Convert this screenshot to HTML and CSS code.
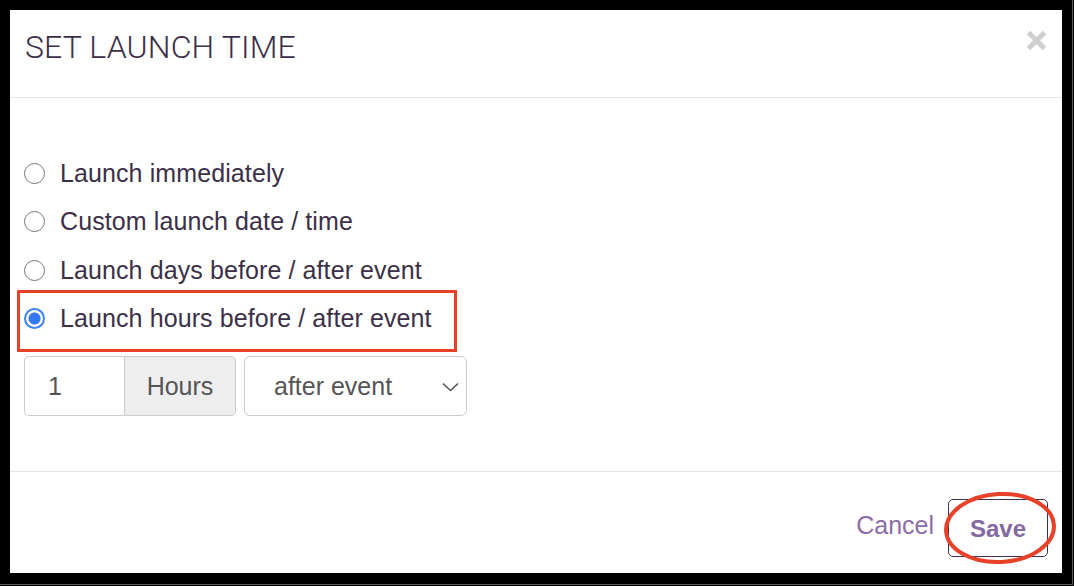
FILE: index.html
```html
<!DOCTYPE html>
<html>
<head>
<meta charset="utf-8">
<link rel="stylesheet" href="styles.css">
</head>
<body>
<div class="screen">
  <div class="modal">
    <div class="modal-header">
      <h1 class="modal-title">SET LAUNCH TIME</h1>
      <svg class="close" width="21" height="21" viewBox="0 0 21 21" aria-label="close">
        <path d="M2.5 2.5 L18.5 18.5 M18.5 2.5 L2.5 18.5" stroke="#cfcfcf" stroke-width="5" fill="none"/>
      </svg>
    </div>
    <div class="modal-body">
      <label class="option"><input type="radio" name="launch" class="radio"><span>Launch immediately</span></label>
      <label class="option"><input type="radio" name="launch" class="radio"><span>Custom launch date / time</span></label>
      <label class="option"><input type="radio" name="launch" class="radio"><span>Launch days before / after event</span></label>
      <div class="highlighted">
        <label class="option"><input type="radio" name="launch" class="radio" checked><span>Launch hours before / after event</span></label>
      </div>
      <div class="controls">
        <div class="input-group">
          <div class="num-input">1</div>
          <div class="addon">Hours</div>
        </div>
        <div class="select">
          <span>after event</span>
          <svg class="chevron" width="17" height="10" viewBox="0 0 17 10"><path d="M1 1.5 L8.5 8.5 L16 1.5" stroke="#555" stroke-width="1.6" fill="none"/></svg>
        </div>
      </div>
    </div>
    <div class="modal-footer">
      <button class="btn-cancel">Cancel</button>
      <div class="save-wrap">
        <button class="btn-save">Save</button>
        <svg class="ring" width="116" height="74" viewBox="0 0 116 74"><ellipse cx="58" cy="37" rx="54" ry="34" transform="rotate(-3 58 37)" stroke="#e8412a" stroke-width="4" fill="none"/></svg>
      </div>
    </div>
  </div>
</div>
</body>
</html>
```
FILE: styles.css
```css
html, body {
  margin: 0;
  padding: 0;
  background: #000;
}
.screen {
  box-sizing: border-box;
  width: 1073px;
  height: 585px;
  padding: 10px 10px 11px 10px;
  border-right: 1px solid #5a5a5a;
  border-bottom: 1px solid #5a5a5a;
}
.modal {
  width: 1052px;
  height: 563px;
  background: #fff;
  display: flex;
  flex-direction: column;
  font-family: "Liberation Sans", Arial, sans-serif;
}
.modal-header {
  height: 87px;
  box-sizing: content-box;
  border-bottom: 1px solid #e5e5e5;
  display: flex;
  justify-content: space-between;
  align-items: flex-start;
  padding: 0 15px 0 15px;
}
.modal-title {
  margin: 19px 0 0 0;
  font-family: Roboto, "Liberation Sans", sans-serif;
  font-weight: 300;
  font-size: 32px;
  line-height: 36px;
  letter-spacing: 0.15px;
  color: #3b2e48;
}
.close {
  margin-top: 20px;
  margin-right: 0;
}
.modal-body {
  flex: 1;
  padding: 51px 14px 0 14px;
}
.option {
  display: flex;
  align-items: center;
  height: 48.5px;
  font-size: 25px;
  letter-spacing: 0.1px;
  color: #3b3048;
  gap: 15px;
}
.radio {
  appearance: none;
  -webkit-appearance: none;
  margin: 0;
  width: 21px;
  height: 21px;
  border-radius: 50%;
  border: 1.5px solid #767676;
  box-sizing: border-box;
  background: #fff;
  flex: none;
}
.radio:checked {
  border: 2px solid #3b82f6;
  background: radial-gradient(circle, #3478f6 0 5.5px, #fff 6.5px);
}
.highlighted {
  position: relative;
}
.highlighted::after {
  content: "";
  position: absolute;
  left: -7px;
  top: -5px;
  width: 440px;
  height: 62px;
  box-sizing: border-box;
  border: 3px solid #e8412a;
  pointer-events: none;
}
.controls {
  display: flex;
  gap: 8px;
  margin-top: 13px;
  font-size: 25px;
  color: #555;
}
.input-group {
  display: flex;
  height: 60px;
}
.num-input {
  box-sizing: border-box;
  width: 100px;
  height: 60px;
  border: 1px solid #ccc;
  border-right: none;
  border-radius: 5px 0 0 5px;
  padding-left: 23px;
  line-height: 58px;
}
.addon {
  box-sizing: border-box;
  width: 112px;
  height: 60px;
  border: 1px solid #ccc;
  border-radius: 0 5px 5px 0;
  background: #eee;
  text-align: center;
  line-height: 58px;
}
.select {
  box-sizing: border-box;
  width: 223px;
  height: 60px;
  border: 1px solid #ccc;
  border-radius: 6px;
  display: flex;
  align-items: center;
  justify-content: space-between;
  padding: 0 7px 0 29px;
  line-height: 58px;
}
.chevron {
  margin-top: 1px;
}
.modal-footer {
  border-top: 1px solid #e5e5e5;
  height: 101px;
  box-sizing: content-box;
  display: flex;
  justify-content: flex-end;
  align-items: flex-start;
  padding: 0 14px 0 14px;
}
.btn-cancel {
  margin-top: 27px;
  height: 58px;
  border: none;
  background: none;
  font-family: "Liberation Sans", Arial, sans-serif;
  font-size: 25px;
  color: #8c6da8;
  padding: 0 14px 5px 14px;
}
.save-wrap {
  position: relative;
  margin-top: 27px;
}
.btn-save {
  box-sizing: border-box;
  width: 100px;
  height: 58px;
  border: 1px solid #3d3349;
  border-radius: 5px;
  background: #fff;
  font-family: "Liberation Sans", Arial, sans-serif;
  font-weight: bold;
  font-size: 24px;
  color: #8468a2;
  padding: 2px 0 0 0;
}
.ring {
  position: absolute;
  left: -6px;
  top: -8px;
  pointer-events: none;
}
```
